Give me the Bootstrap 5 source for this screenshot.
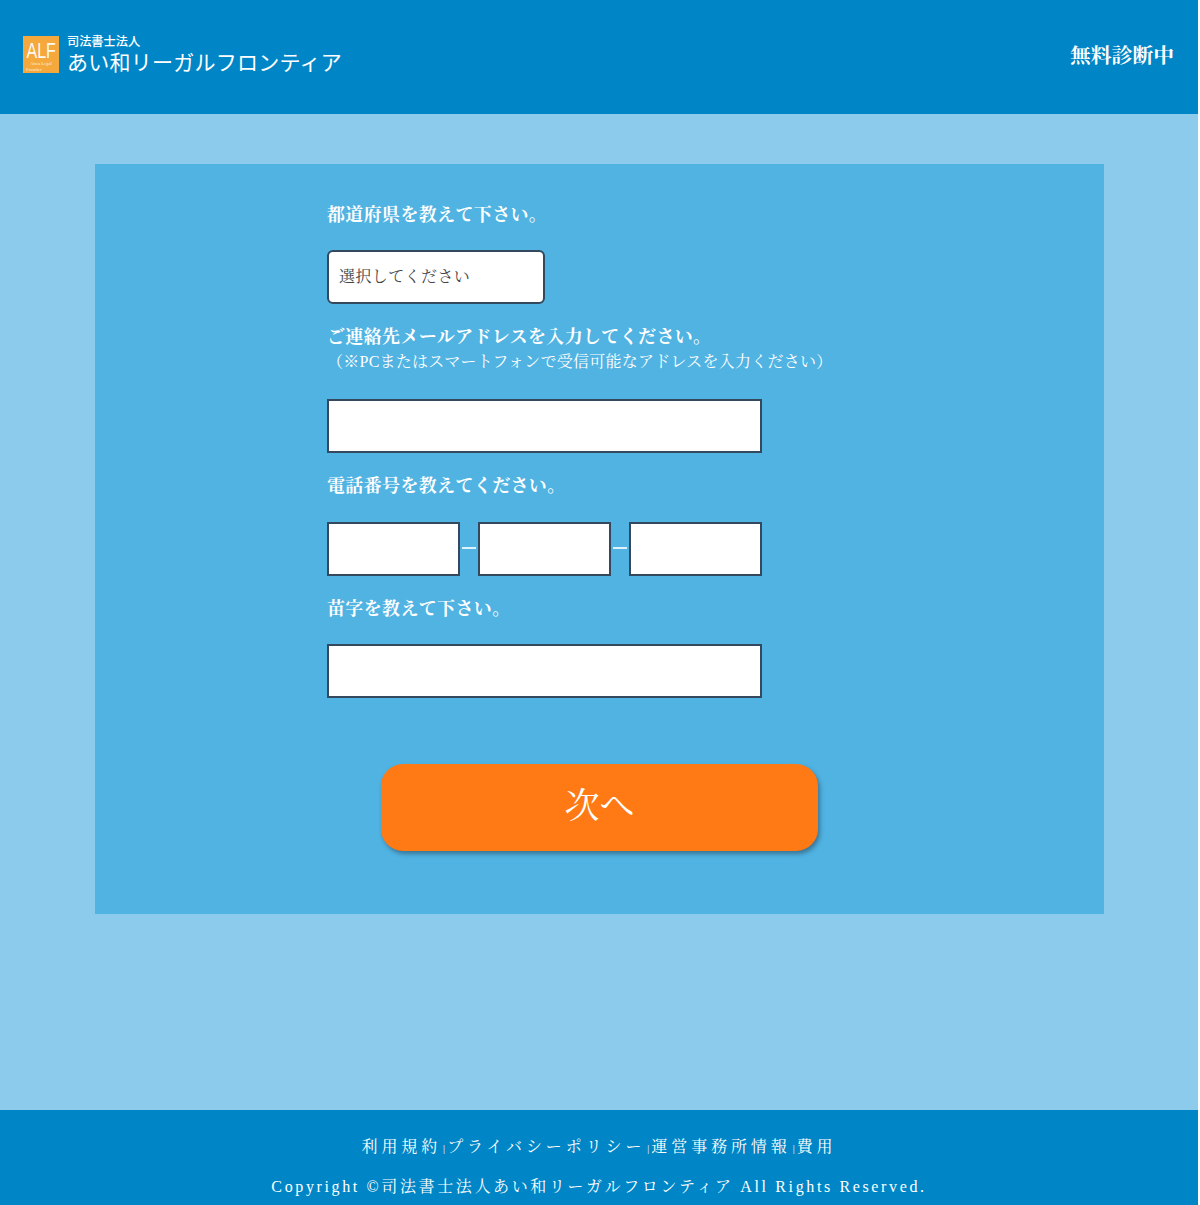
<!DOCTYPE html>
<html lang="ja">
<head>
<meta charset="utf-8">
<title>無料診断</title>
<link href="https://cdn.jsdelivr.net/npm/bootstrap@5.3.0/dist/css/bootstrap.min.css" rel="stylesheet">
<style>
html,body{background:#fff;}
body{font-family:"Liberation Serif","Noto Serif CJK JP","Noto Sans CJK JP",serif;color:#fff;}
.page-wrap{width:1198px;height:1205px;background:#8ccbeb;}
.top-bar{height:114px;background:#0086c6;padding:0 24px 5px 23px;}
.logo-box{display:block;width:36px;height:37px;flex:none;}
.logo-text{font-family:"Noto Sans CJK JP",sans-serif;margin-left:8px;}
.logo-small{font-size:12.2px;line-height:13px;font-weight:500;margin-top:-1px;}
.logo-big{font-size:21px;line-height:26px;font-weight:400;letter-spacing:.25px;white-space:nowrap;}
.top-status{font-size:20.8px;font-weight:700;line-height:1;padding-top:4px;}
.body-area{height:996px;padding:50px 94px 0 95px;}
.panel-box{width:1009px;height:750px;background:#50b3e2;padding:36px 0 0 232px;}
.q-label{font-size:18px;font-weight:700;height:26px;line-height:26px;padding-top:2px;letter-spacing:.35px;margin:0;}
.q-sub{font-size:16px;line-height:25px;padding-top:1px;letter-spacing:.25px;margin:0;white-space:nowrap;}
.q-gap{margin-top:18px;}
.q-ctl{margin-top:25px;}
.q-ctl-tight{margin-top:24px;}
.field-box.form-control,.field-box.form-select{height:54px;border:2px solid #34495e;border-radius:0;background:#fff;padding:0 10px;box-shadow:none;}
.wide-field{width:435px;}
.tel-row{width:435px;}
.tel-dash{width:14px;height:2px;background:#dff1fa;flex:none;margin-bottom:3px;}
.tel-field.form-control{width:133px;flex:none;}
.pref-field.form-select{width:218px;border-radius:6px;background-image:none;font-size:16px;letter-spacing:.4px;color:#444;padding-bottom:1px;font-weight:400;}
.next-btn.btn{display:block;width:437px;height:87px;margin:66px 0 0 54px;padding:0 0 3px;background:#ff7a14;border:0;border-radius:22px;color:#fff;font-size:35px;line-height:1;box-shadow:2px 3px 4px rgba(40,70,90,.55);}
.foot-bar{height:95px;background:#0086c6;text-align:center;font-size:16px;line-height:24px;padding-top:25px;}
.foot-bar p{margin:0 0 14px;white-space:nowrap;}
.foot-links{letter-spacing:3.9px;}
.foot-copy{letter-spacing:2.63px;}
.foot-bar a{color:#fff;text-decoration:none;}
.foot-sep{font-size:10px;letter-spacing:0;padding:0 2px;}
</style>
</head>
<body>
<div class="page-wrap">
  <header class="top-bar d-flex align-items-center justify-content-between">
    <div class="d-flex align-items-center">
      <svg class="logo-box" viewBox="0 0 36 37" role="img" aria-label="ALF">
        <rect width="36" height="37" fill="#f5a93c"/>
        <text transform="translate(3.5 21.5) scale(1 1.4)" font-family="Liberation Sans, sans-serif" font-size="16" fill="#fff" fill-opacity=".95">ALF</text>
        <text x="18" y="28.5" text-anchor="middle" font-family="Liberation Serif, serif" font-size="4.4" font-weight="700" fill="#fff" fill-opacity=".6">Aiwa Legal</text>
        <text x="3" y="35" font-family="Liberation Serif, serif" font-size="4.4" font-weight="700" fill="#fff" fill-opacity=".6">Frontier</text>
      </svg>
      <div class="logo-text">
        <div class="logo-small">司法書士法人</div>
        <div class="logo-big">あい和リーガルフロンティア</div>
      </div>
    </div>
    <div class="top-status">無料診断中</div>
  </header>
  <main class="body-area">
    <form class="panel-box">
      <p class="q-label">都道府県を教えて下さい。</p>
      <select class="form-select field-box pref-field q-ctl-tight"><option>選択してください</option></select>
      <p class="q-label q-gap">ご連絡先メールアドレスを入力してください。</p>
      <p class="q-sub">（※PCまたはスマートフォンで受信可能なアドレスを入力ください）</p>
      <input class="form-control field-box wide-field q-ctl" type="email" aria-label="メールアドレス">
      <p class="q-label q-gap">電話番号を教えてください。</p>
      <div class="tel-row d-flex align-items-center justify-content-between q-ctl">
        <input class="form-control field-box tel-field" type="tel" aria-label="電話番号1">
        <span class="tel-dash"></span>
        <input class="form-control field-box tel-field" type="tel" aria-label="電話番号2">
        <span class="tel-dash"></span>
        <input class="form-control field-box tel-field" type="tel" aria-label="電話番号3">
      </div>
      <p class="q-label q-gap">苗字を教えて下さい。</p>
      <input class="form-control field-box wide-field q-ctl-tight" type="text" aria-label="苗字">
      <button type="button" class="btn next-btn">次へ</button>
    </form>
  </main>
  <footer class="foot-bar">
    <p class="foot-links"><a href="#">利用規約</a><span class="foot-sep">|</span><a href="#">プライバシーポリシー</a><span class="foot-sep">|</span><a href="#">運営事務所情報</a><span class="foot-sep">|</span><a href="#">費用</a></p>
    <p class="foot-copy">Copyright ©司法書士法人あい和リーガルフロンティア All Rights Reserved.</p>
  </footer>
</div>
<script src="https://cdn.jsdelivr.net/npm/bootstrap@5.3.0/dist/js/bootstrap.bundle.min.js"></script>
</body>
</html>
